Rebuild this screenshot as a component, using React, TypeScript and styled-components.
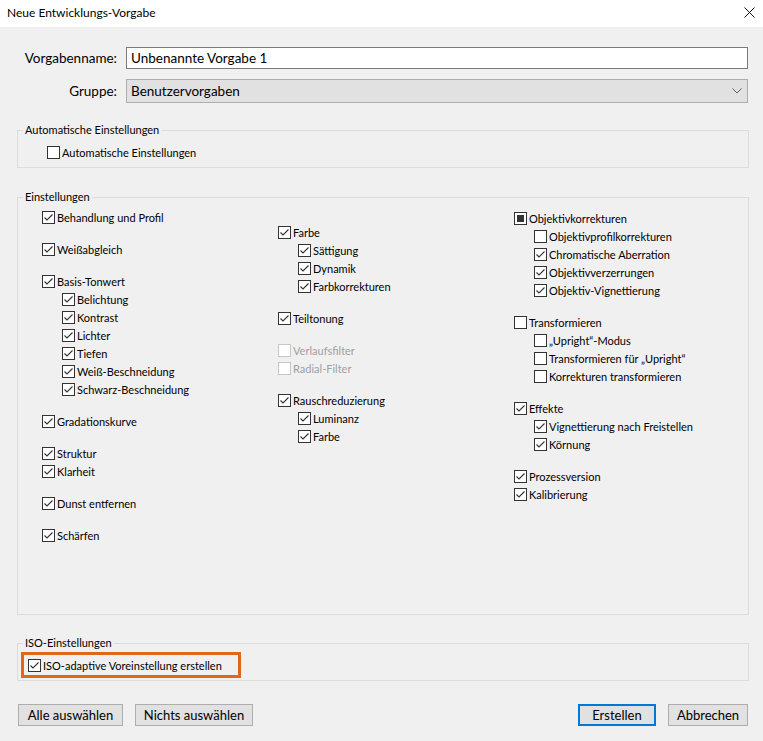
import React from 'react'
import styled, { createGlobalStyle } from 'styled-components'

type CheckState = 'on' | 'off' | 'mixed'

interface Item {
  label: string
  state: CheckState
  sub?: boolean
  disabled?: boolean
}

const columns: { offset: number; groups: Item[][] }[] = [
  {
    offset: 0,
    groups: [
      [{ label: 'Behandlung und Profil', state: 'on' }],
      [{ label: 'Weißabgleich', state: 'on' }],
      [
        { label: 'Basis-Tonwert', state: 'on' },
        { label: 'Belichtung', state: 'on', sub: true },
        { label: 'Kontrast', state: 'on', sub: true },
        { label: 'Lichter', state: 'on', sub: true },
        { label: 'Tiefen', state: 'on', sub: true },
        { label: 'Weiß-Beschneidung', state: 'on', sub: true },
        { label: 'Schwarz-Beschneidung', state: 'on', sub: true },
      ],
      [{ label: 'Gradationskurve', state: 'on' }],
      [
        { label: 'Struktur', state: 'on' },
        { label: 'Klarheit', state: 'on' },
      ],
      [{ label: 'Dunst entfernen', state: 'on' }],
      [{ label: 'Schärfen', state: 'on' }],
    ],
  },
  {
    offset: 15,
    groups: [
      [
        { label: 'Farbe', state: 'on' },
        { label: 'Sättigung', state: 'on', sub: true },
        { label: 'Dynamik', state: 'on', sub: true },
        { label: 'Farbkorrekturen', state: 'on', sub: true },
      ],
      [{ label: 'Teiltonung', state: 'on' }],
      [
        { label: 'Verlaufsfilter', state: 'off', disabled: true },
        { label: 'Radial-Filter', state: 'off', disabled: true },
      ],
      [
        { label: 'Rauschreduzierung', state: 'on' },
        { label: 'Luminanz', state: 'on', sub: true },
        { label: 'Farbe', state: 'on', sub: true },
      ],
    ],
  },
  {
    offset: 1,
    groups: [
      [
        { label: 'Objektivkorrekturen', state: 'mixed' },
        { label: 'Objektivprofilkorrekturen', state: 'off', sub: true },
        { label: 'Chromatische Aberration', state: 'on', sub: true },
        { label: 'Objektivverzerrungen', state: 'on', sub: true },
        { label: 'Objektiv-Vignettierung', state: 'on', sub: true },
      ],
      [
        { label: 'Transformieren', state: 'off' },
        { label: '„Upright“-Modus', state: 'off', sub: true },
        { label: 'Transformieren für „Upright“', state: 'off', sub: true },
        { label: 'Korrekturen transformieren', state: 'off', sub: true },
      ],
      [
        { label: 'Effekte', state: 'on' },
        { label: 'Vignettierung nach Freistellen', state: 'on', sub: true },
        { label: 'Körnung', state: 'on', sub: true },
      ],
      [
        { label: 'Prozessversion', state: 'on' },
        { label: 'Kalibrierung', state: 'on' },
      ],
    ],
  },
]

const Check = ({ state, disabled }: { state: CheckState; disabled?: boolean }) => (
  <Box $disabled={disabled}>
    {state === 'on' && (
      <svg width="11" height="11" viewBox="0 0 11 11">
        <path d="M1.5 5.5 L4 8 L9.5 2.5" fill="none" stroke="#333" strokeWidth="1.1" />
      </svg>
    )}
    {state === 'mixed' && <Mixed />}
  </Box>
)

const CheckRow = ({ item }: { item: Item }) => (
  <Row $sub={item.sub} $disabled={item.disabled}>
    <Check state={item.state} disabled={item.disabled} />
    <span>{item.label}</span>
  </Row>
)

const App = () => {
  return (
    <>
      <GlobalStyle />
      <Window>
        <TitleBar>
          <span>Neue Entwicklungs-Vorgabe</span>
          <svg width="11" height="11" viewBox="0 0 11 11">
            <path d="M0.5 0.5 L10.5 10.5 M10.5 0.5 L0.5 10.5" stroke="#111" strokeWidth="1" />
          </svg>
        </TitleBar>
        <Content>
          <FormRow>
            <FieldLabel>Vorgabenname:</FieldLabel>
            <TextInput>Unbenannte Vorgabe 1</TextInput>
          </FormRow>
          <FormRow>
            <FieldLabel>Gruppe:</FieldLabel>
            <Select>
              <span>Benutzervorgaben</span>
              <svg width="10" height="6" viewBox="0 0 10 6">
                <path d="M0.5 0.5 L5 5 L9.5 0.5" fill="none" stroke="#606060" strokeWidth="1" />
              </svg>
            </Select>
          </FormRow>

          <Group $top={20} $padTop={6} $padBottom={6}>
            <Legend>Automatische Einstellungen</Legend>
            <Inset $left={29}>
              <CheckRow item={{ label: 'Automatische Einstellungen', state: 'off' }} />
            </Inset>
          </Group>

          <Group $top={22} $padTop={4} $padBottom={0}>
            <Legend>Einstellungen</Legend>
            <Columns>
              {columns.map((col, ci) => (
                <Column key={ci} $offset={col.offset}>
                  {col.groups.map((group, gi) => (
                    <Block key={gi}>
                      {group.map((item, ii) => (
                        <CheckRow key={ii} item={item} />
                      ))}
                    </Block>
                  ))}
                </Column>
              ))}
            </Columns>
          </Group>

          <Group $top={21} $padTop={2} $padBottom={2}>
            <Legend>ISO-Einstellungen</Legend>
            <Highlight>
              <CheckRow item={{ label: 'ISO-adaptive Voreinstellung erstellen', state: 'on' }} />
            </Highlight>
          </Group>

          <ButtonBar>
            <ButtonSet>
              <Button $width={105}>Alle auswählen</Button>
              <Button $width={118}>Nichts auswählen</Button>
            </ButtonSet>
            <ButtonSet>
              <Button $primary $width={78}>Erstellen</Button>
              <Button $width={80}>Abbrechen</Button>
            </ButtonSet>
          </ButtonBar>
        </Content>
      </Window>
    </>
  )
}

export default App

const GlobalStyle = createGlobalStyle`
    body {
        margin: 0;
        background: #f0f0f0;
        font-family: "Lato", "Liberation Sans", sans-serif;
        color: #000;
    }
`

const Window = styled.div`
    width: 763px;
    height: 741px;
    background: #f0f0f0;
    overflow: hidden;
`

const TitleBar = styled.div`
    height: 27px;
    background: #ffffff;
    display: flex;
    align-items: center;
    justify-content: space-between;
    padding: 0 7px 3px 7px;
    box-sizing: border-box;
    font-size: 12px;

    svg {
        margin-right: 1px;
    }
`

const Content = styled.div`
    padding: 20px 14px 0 17px;
`

const FormRow = styled.div`
    display: grid;
    grid-template-columns: 100px 1fr;
    column-gap: 9px;
    align-items: center;
    margin-bottom: 10px;
    padding-right: 1px;
    font-size: 13.5px;
`

const FieldLabel = styled.div`
    text-align: right;
`

const TextInput = styled.div`
    height: 22px;
    box-sizing: border-box;
    border: 1px solid #7a7a7a;
    background: #ffffff;
    padding: 0 4px;
    display: flex;
    align-items: center;
`

const Select = styled.div`
    height: 24px;
    box-sizing: border-box;
    border: 1px solid #adadad;
    background: #e1e1e1;
    padding: 0 5px 0 4px;
    display: flex;
    align-items: center;
    justify-content: space-between;
`

const Group = styled.fieldset<{ $top: number; $padTop: number; $padBottom: number }>`
    margin: ${p => p.$top}px 0 0 0;
    padding: ${p => p.$padTop}px 0 ${p => p.$padBottom}px 0;
    border: 1px solid #dcdcdc;
    min-width: 0;
`

const Legend = styled.legend`
    margin-left: 5px;
    padding: 0 2px;
    font-size: 11px;
    line-height: 14px;
`

const Inset = styled.div<{ $left: number }>`
    padding-left: ${p => p.$left}px;
`

const Columns = styled.div`
    display: grid;
    grid-template-columns: 236px 236px 1fr;
    padding-left: 24px;
    height: 406px;
`

const Column = styled.div<{ $offset: number }>`
    display: flex;
    flex-direction: column;
    gap: 14px;
    padding-top: ${p => p.$offset}px;
`

const Block = styled.div`
    display: flex;
    flex-direction: column;
`

const Row = styled.div<{ $sub?: boolean; $disabled?: boolean }>`
    display: flex;
    align-items: center;
    gap: 2px;
    height: 18px;
    padding-left: ${p => (p.$sub ? 20 : 0)}px;
    font-size: 11px;
    white-space: nowrap;
    color: ${p => (p.$disabled ? '#a0a0a0' : '#000')};
`

const Box = styled.span<{ $disabled?: boolean }>`
    width: 13px;
    height: 13px;
    box-sizing: border-box;
    border: 1px solid ${p => (p.$disabled ? '#c6c6c6' : '#333333')};
    background: #ffffff;
    display: flex;
    align-items: center;
    justify-content: center;
    flex-shrink: 0;
`

const Mixed = styled.span`
    width: 7px;
    height: 7px;
    background: #333333;
`

const Highlight = styled.div`
    display: inline-flex;
    align-items: center;
    margin-left: 3px;
    height: 26px;
    box-sizing: border-box;
    border: 3px solid #e0661b;
    padding: 0 16px 0 4px;
`

const ButtonBar = styled.div`
    display: flex;
    justify-content: space-between;
    margin-top: 23px;
    padding: 0 1px;
`

const ButtonSet = styled.div`
    display: flex;
    gap: 12px;
`

const Button = styled.button<{ $primary?: boolean; $width: number }>`
    width: ${p => p.$width}px;
    height: 22px;
    box-sizing: border-box;
    padding: 0;
    background: #e1e1e1;
    border: ${p => (p.$primary ? '2px solid #0078d7' : '1px solid #adadad')};
    font-family: "Lato", "Liberation Sans", sans-serif;
    font-size: 13px;
    color: #000;
`
